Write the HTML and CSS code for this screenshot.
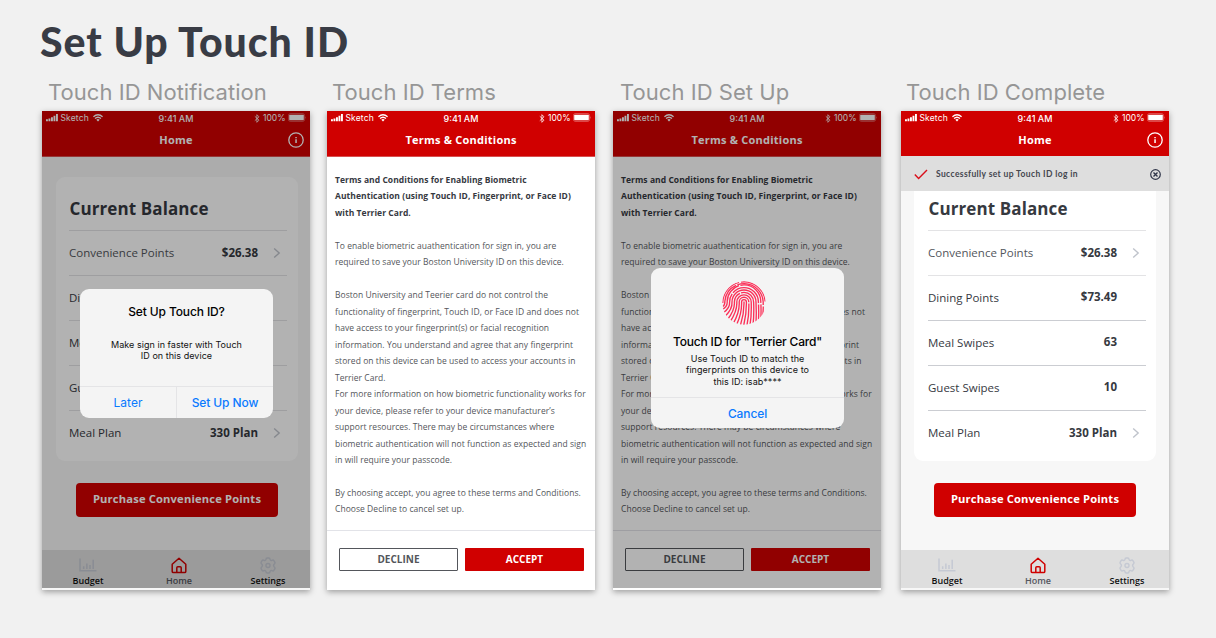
FILE: index.html
```html
<!DOCTYPE html>
<html lang="en">
<head>
<meta charset="utf-8">
<title>Set Up Touch ID</title>
<link rel="stylesheet" href="styles.css">
</head>
<body>
<svg class="defs" width="0" height="0">
  <symbol id="signal" viewBox="0 0 12 8"><path d="M0 5.200h1.900V7.200H0zM2.500 4.400h1.900V7.200H2.500zM5 3.200h1.900V7.200H5zM7.500 1.700h1.900V7.200H7.500zM10 0h1.900V7.200H10z" fill="#fff"/></symbol>
  <symbol id="wifi" viewBox="0 0 10 8"><g fill="none" stroke="#fff" stroke-width="1.3"><path d="M.4 2.700Q5-1.300 9.600 2.700M2 4.600Q5 1.900 8 4.600"/></g><path d="M3.300 5.800Q5 4.400 6.700 5.800L5 7.600z" fill="#fff"/></symbol>
  <symbol id="bluetooth" viewBox="0 0 6 9"><path d="M.8 2.300 5 6.200 2.900 8.300V.7L5 2.800.8 6.700" fill="none" stroke="#fff" stroke-width=".8"/></symbol>
  <symbol id="battery" viewBox="0 0 18 9"><rect x=".4" y=".6" width="16.200" height="7.800" rx="2" fill="none" stroke="#fff" stroke-opacity=".45" stroke-width=".7"/><rect x="1.200" y="1.700" width="14.600" height="5.600" rx=".8" fill="#fff"/><path d="M17.200 3.200q1 1.300 0 2.600z" fill="#fff" fill-opacity=".5"/></symbol>
  <symbol id="info" viewBox="0 0 16 16"><circle cx="8" cy="8" r="7.200" fill="none" stroke="#fff" stroke-width="1.300"/><path d="M7.300 4.900h1.500v1.300H7.300zM7.300 7.300h1.500v3.700H7.300z" fill="#fff"/></symbol>
  <symbol id="chevron" viewBox="0 0 8 12"><path d="M1.200 1.400 6.200 6 1.200 10.600" fill="none" stroke="#bfc3cb" stroke-width="1.400"/></symbol>
  <symbol id="chart" viewBox="0 0 18 14"><path d="M1 .5V12.800H17.500M4.700 11V8.300M7.900 11V5.500M11 11V7M14.200 11V1.800" fill="none" stroke="#c5c9d3" stroke-width="1.500"/></symbol>
  <symbol id="home" viewBox="0 0 16 17"><path d="M1.200 7.300 8 1.200 14.800 7.300V14.400Q14.800 15.600 13.600 15.600H2.400Q1.200 15.600 1.200 14.400ZM5.800 15.600V10.700Q5.800 9.700 6.800 9.700H9.200Q10.200 9.700 10.200 10.700V15.600" fill="none" stroke="#cf0000" stroke-width="1.500" stroke-linejoin="round"/></symbol>
  <symbol id="gear" viewBox="0 0 16 17"><path d="M5.900 2.600Q6.100 1 7.200 1H8.800Q9.900 1 10.100 2.600 10.500 3.800 11.900 3.300 13.300 2.700 13.900 3.700L14.800 5.200Q15.400 6.200 14.100 7.200 13.100 8.500 14.100 9.800 15.400 10.800 14.800 11.800L13.900 13.300Q13.300 14.300 11.900 13.700 10.500 13.200 10.100 14.400 9.900 16 8.800 16H7.200Q6.100 16 5.900 14.400 5.500 13.200 4.100 13.700 2.700 14.300 2.100 13.300L1.200 11.800Q.6 10.800 1.900 9.800 2.900 8.500 1.900 7.200 .6 6.200 1.200 5.200L2.100 3.700Q2.700 2.700 4.100 3.300 5.500 3.800 5.900 2.600Z" fill="none" stroke="#c5c9d3" stroke-width="1.400" stroke-linejoin="round"/><circle cx="8" cy="8.500" r="2" fill="none" stroke="#c5c9d3" stroke-width="1.400"/></symbol>
</svg>

<h1 class="title">Set Up Touch ID</h1>
<main class="boards">

  <section class="board">
    <h2 class="label label-1">Touch ID Notification</h2>
    <div class="phone">
      <header class="bar">
        <div class="status"><svg class="i-signal"><use href="#signal"/></svg><span class="carrier">Sketch</span><svg class="i-wifi"><use href="#wifi"/></svg><span class="time">9:41 AM</span><svg class="i-bt"><use href="#bluetooth"/></svg><span class="pct">100%</span><svg class="i-bat"><use href="#battery"/></svg></div>
        <div class="nav"><span>Home</span><svg class="i-info"><use href="#info"/></svg></div>
      </header>
      <div class="content">
        <div class="card">
          <h3>Current Balance</h3>
          <div class="row"><span class="soft">Convenience Points</span><b>$26.38</b><svg><use href="#chevron"/></svg></div>
          <div class="row"><span>Dining Points</span><b>$73.49</b></div>
          <div class="row"><span>Meal Swipes</span><b>63</b></div>
          <div class="row"><span>Guest Swipes</span><b>10</b></div>
          <div class="row"><span>Meal Plan</span><b>330 Plan</b><svg><use href="#chevron"/></svg></div>
        </div>
        <div class="purchase">Purchase Convenience Points</div>
      </div>
      <footer class="tabs">
        <div class="tab"><svg class="i-chart"><use href="#chart"/></svg>Budget</div>
        <div class="tab current"><svg class="i-home"><use href="#home"/></svg>Home</div>
        <div class="tab"><svg class="i-gear"><use href="#gear"/></svg>Settings</div>
      </footer>
      <div class="dim"></div>
      <div class="dialog dialog-setup">
        <h4>Set Up Touch ID?</h4>
        <p>Make sign in faster with Touch<br>ID on this device</p>
        <div class="actions"><span>Later</span><span class="strong">Set Up Now</span></div>
      </div>
    </div>
  </section>

  <section class="board">
    <h2 class="label label-2">Touch ID Terms</h2>
    <div class="phone white">
      <header class="bar">
        <div class="status"><svg class="i-signal"><use href="#signal"/></svg><span class="carrier">Sketch</span><svg class="i-wifi"><use href="#wifi"/></svg><span class="time">9:41 AM</span><svg class="i-bt"><use href="#bluetooth"/></svg><span class="pct">100%</span><svg class="i-bat"><use href="#battery"/></svg></div>
        <div class="nav"><span>Terms &amp; Conditions</span></div>
      </header>
      <div class="terms">
        <p class="lead">Terms and Conditions for Enabling Biometric<br>Authentication (using Touch ID, Fingerprint, or Face ID)<br>with Terrier Card.</p>
        <p>To enable biometric auathentication for sign in, you are<br>required to save your Boston University ID on this device.</p>
        <p>Boston University and Teerier card do not control the<br>functionality of fingerprint, Touch ID, or Face ID and does not<br>have access to your fingerprint(s) or facial recognition<br>information. You understand and agree that any fingerprint<br>stored on this device can be used to access your accounts in<br>Terrier Card.<br>For more information on how biometric functionality works for<br>your device, please refer to your device manufacturer’s<br>support resources. There may be circumstances where<br>biometric authentication will not function as expected and sign<br>in will require your passcode.</p>
        <p>By choosing accept, you agree to these terms and Conditions.<br>Choose Decline to cancel set up.</p>
      </div>
      <div class="choices"><span class="decline">DECLINE</span><span class="accept">ACCEPT</span></div>
    </div>
  </section>

  <section class="board">
    <h2 class="label label-3">Touch ID Set Up</h2>
    <div class="phone white">
      <header class="bar">
        <div class="status"><svg class="i-signal"><use href="#signal"/></svg><span class="carrier">Sketch</span><svg class="i-wifi"><use href="#wifi"/></svg><span class="time">9:41 AM</span><svg class="i-bt"><use href="#bluetooth"/></svg><span class="pct">100%</span><svg class="i-bat"><use href="#battery"/></svg></div>
        <div class="nav"><span>Terms &amp; Conditions</span></div>
      </header>
      <div class="terms">
        <p class="lead">Terms and Conditions for Enabling Biometric<br>Authentication (using Touch ID, Fingerprint, or Face ID)<br>with Terrier Card.</p>
        <p>To enable biometric auathentication for sign in, you are<br>required to save your Boston University ID on this device.</p>
        <p>Boston University and Teerier card do not control the<br>functionality of fingerprint, Touch ID, or Face ID and does not<br>have access to your fingerprint(s) or facial recognition<br>information. You understand and agree that any fingerprint<br>stored on this device can be used to access your accounts in<br>Terrier Card.<br>For more information on how biometric functionality works for<br>your device, please refer to your device manufacturer’s<br>support resources. There may be circumstances where<br>biometric authentication will not function as expected and sign<br>in will require your passcode.</p>
        <p>By choosing accept, you agree to these terms and Conditions.<br>Choose Decline to cancel set up.</p>
      </div>
      <div class="choices"><span class="decline">DECLINE</span><span class="accept">ACCEPT</span></div>
      <div class="dim"></div>
      <div class="dialog dialog-finger">
        <svg class="i-finger" viewBox="0 0 44 44">
          <clipPath id="disc"><circle cx="22" cy="22" r="21.700"/></clipPath>
          <g clip-path="url(#disc)" fill="none" stroke="#fb3058" stroke-width="1.350">
            <path d="M22 20.500Q22.300 32 18.500 44"/>
            <path d="M14.500 44Q20 32 19.600 21A2.400 2.400 0 0 1 24.400 21Q24.600 33 21.800 44"/>
            <path d="M11 43Q17.800 31 17.200 21A4.800 4.800 0 0 1 26.800 21Q27.200 34 25 44" stroke-dasharray="38 1.200"/>
            <path d="M8 41Q15.400 30 14.800 21A7.200 7.200 0 0 1 29.200 21Q29.700 34 28 44"/>
            <path d="M5.500 38.500Q13 29 12.400 21A9.600 9.600 0 0 1 31.600 21Q32.200 33 31 44" stroke-dasharray="30 1.200 60"/>
            <path d="M3 35.500Q10.600 28 10 21A12 12 0 0 1 34 21Q34.600 32 34 43"/>
            <path d="M1 32Q8.200 27 7.600 21A14.400 14.400 0 0 1 36.400 21Q37 31 36.500 41" stroke-dasharray="22 1.400 36 1.400"/>
            <path d="M0 28.500Q5.600 26 5.200 20.500A16.800 16.800 0 0 1 38.800 21Q39.300 30 38.800 38" stroke-dasharray="31 1.400"/>
            <path d="M1 25.500Q3 24 2.900 20A19.200 19.200 0 0 1 41.200 21V24M41.300 25.500 40.900 34" stroke-dasharray="26 1.400 50"/>
            <path d="M.7 22A21.200 21.200 0 0 1 17 1.400M19 1A21.200 21.200 0 0 1 43.200 20.500"/>
          </g>
        </svg>
        <h4>Touch ID for "Terrier Card"</h4>
        <p>Use Touch ID to match the<br>fingerprints on this device to<br>this ID: isab****</p>
        <div class="actions"><span class="strong">Cancel</span></div>
      </div>
    </div>
  </section>

  <section class="board">
    <h2 class="label label-4">Touch ID Complete</h2>
    <div class="phone done">
      <header class="bar">
        <div class="status"><svg class="i-signal"><use href="#signal"/></svg><span class="carrier">Sketch</span><svg class="i-wifi"><use href="#wifi"/></svg><span class="time">9:41 AM</span><svg class="i-bt"><use href="#bluetooth"/></svg><span class="pct">100%</span><svg class="i-bat"><use href="#battery"/></svg></div>
        <div class="nav"><span>Home</span><svg class="i-info"><use href="#info"/></svg></div>
      </header>
      <div class="content">
        <div class="card">
          <h3>Current Balance</h3>
          <div class="row"><span class="soft">Convenience Points</span><b>$26.38</b><svg><use href="#chevron"/></svg></div>
          <div class="row"><span>Dining Points</span><b class="up">$73.49</b></div>
          <div class="row"><span>Meal Swipes</span><b class="up">63</b></div>
          <div class="row"><span>Guest Swipes</span><b class="up">10</b></div>
          <div class="row"><span>Meal Plan</span><b>330 Plan</b><svg><use href="#chevron"/></svg></div>
        </div>
        <div class="purchase">Purchase Convenience Points</div>
      </div>
      <footer class="tabs">
        <div class="tab"><svg class="i-chart"><use href="#chart"/></svg>Budget</div>
        <div class="tab current"><svg class="i-home"><use href="#home"/></svg>Home</div>
        <div class="tab"><svg class="i-gear"><use href="#gear"/></svg>Settings</div>
      </footer>
      <div class="toast">
        <svg class="i-check" viewBox="0 0 14 11"><path d="M.8 5.600 4.600 9.600 13 .9" fill="none" stroke="#d90f1b" stroke-width="1.400"/></svg>
        <span>Successfully set up Touch ID log in</span>
        <svg class="i-close" viewBox="0 0 11 11"><circle cx="5.500" cy="5.500" r="4.800" fill="none" stroke="#30364a" stroke-width="1.200"/><path d="M3.500 3.500 7.500 7.500M7.500 3.500 3.500 7.500" stroke="#30364a" stroke-width="1.400"/></svg>
      </div>
    </div>
  </section>
</main>
</body>
</html>
```
FILE: styles.css
```css
* { box-sizing: border-box; }
body { margin: 0; width: 1216px; height: 638px; overflow: hidden; background: #f1f1f1; font-family: "Open Sans", sans-serif; color: #36393f; }
h1, h2, h3, h4, p { margin: 0; font-weight: normal; white-space: nowrap; }
svg { display: block; flex: none; }
.defs { position: absolute; }

.title { height: 76px; padding: 17px 0 0 40px; font: 900 41px/50px Lato, sans-serif; letter-spacing: 0.97px; color: #393c45; }
.boards { display: grid; grid-template-columns: 285px 286px 288px 268px; padding-left: 42px; }
.board { width: 268px; }
.label { height: 35px; font: 400 22px/33px Inter, sans-serif; color: #969696; letter-spacing: 0.04px; }
.label-1 { padding-left: 6px; }
.label-2 { padding-left: 5px; }
.label-3 { padding-left: 7px; }
.label-4 { padding-left: 5px; }

.phone { position: relative; display: flex; flex-direction: column; width: 268px; height: 479px; padding-bottom: 2px; background: #f7f7f7; box-shadow: 0 2px 6px rgba(0, 0, 0, 0.35); }
.phone.white { background: #fff; }
.bar { height: 46px; background: #d00000; color: #fff; flex: none; border-bottom: 1px solid #d85050; }
.done .bar { height: 45px; border-bottom: 0; }
.status { display: grid; grid-template-columns: 12px 30px 10px 1fr 6px 23px 18px; column-gap: 2.5px; align-items: center; height: 15px; padding: 0 4px; font: 400 8.500px/15px Inter, sans-serif; }
.carrier { letter-spacing: 0.15px; }
.time { font-weight: 500; font-size: 9px; text-align: center; padding: 0 5px 0 0; letter-spacing: 0; }
.pct { text-align: right; }
.i-signal { width: 12px; height: 8px; margin-top: -1px; }
.i-wifi { width: 10px; height: 8px; margin-top: -1px; }
.i-bt { width: 6px; height: 9px; margin-top: -1px; }
.i-bat { width: 18px; height: 9px; margin-top: -2px; }
.nav { display: grid; grid-template-columns: 1fr; height: 29px; line-height: 28px; text-align: center; font-size: 11px; font-weight: 700; letter-spacing: 0.23px; }
.nav > * { grid-area: 1 / 1; }
.i-info { width: 16px; height: 16px; justify-self: end; margin: 6px 6px 0 0; }

.content { flex: 1; padding: 20px 12px 0 14px; }
.done .content { padding: 21px 13px 0; }
.card { height: 284px; padding: 11px 11px 0 13px; background: #fff; border-radius: 9px; }
.done .card { padding: 11px 10px 0 14px; }
.card h3 { height: 42px; padding-left: 0.5px; font-size: 17px; line-height: 42px; font-weight: 700; letter-spacing: 0.1px; }
.row { display: grid; grid-template-columns: 1fr auto 8px; column-gap: 15px; align-items: center; height: 45px; padding: 0 6px 2px 0; border-top: 1px solid #e3e3e5; font-size: 11.500px; }
.done .row:nth-child(n+4) { border-top-color: #cbcdd2; }
.row b { grid-column: 2; font-weight: 700; font-size: 11.500px; }
.row .up { padding-bottom: 2px; }
.row .soft { color: #53565c; }
.row svg { width: 8px; height: 12px; margin-top: 1px; }
.purchase { width: 202px; height: 34px; margin: 22px auto 0 20px; background: #d00000; border-radius: 4px; color: #fff; text-align: center; font-size: 11.200px; line-height: 32px; font-weight: 700; letter-spacing: 0.16px; }
.tabs { display: grid; grid-template-columns: 92px 90px 88px; width: 268px; height: 38px; flex: none; background: #dedede; font-size: 9px; font-weight: 600; color: #111; }
.tab { display: grid; grid-template-rows: 25px 12px; justify-items: center; align-items: center; line-height: 12px; }
.tab.current { color: #55575f; }
.tab svg { margin-top: 6px; }
.i-chart { width: 18px; height: 14px; }
.tab .i-chart { margin-top: 4px; }
.i-home, .i-gear { width: 16px; height: 17px; }

.dim { position: absolute; inset: 0 0 2px; background: rgba(0, 0, 0, 0.3); }
.dialog { position: absolute; width: 193px; display: flex; flex-direction: column; background: #f4f4f4; border-radius: 9px; color: #111; text-align: center; font-family: Inter, sans-serif; overflow: hidden; }
.dialog-setup { left: 38px; top: 178px; height: 129px; }
.dialog-finger { left: 38px; top: 156.500px; height: 160.500px; }
.dialog h4 { font-size: 12px; line-height: 16px; font-weight: 500; color: #000; letter-spacing: -0.18px; }
.dialog p { font-size: 9px; line-height: 11.500px; letter-spacing: 0.04px; }
.dialog-setup h4 { padding-top: 15px; letter-spacing: -0.12px; }
.dialog-setup p { padding-top: 19px; line-height: 11px; }
.dialog-finger p { padding-top: 3px; }
.i-finger { width: 44px; height: 44px; margin: 13px auto 9px 71px; }
.actions { display: flex; margin-top: auto; height: 32px; border-top: 1px solid #e4e4e6; color: #0a7aff; font-size: 12px; line-height: 31px; }
.dialog-finger .actions { height: 31px; }
.actions span { flex: 1; }
.actions span + span { border-left: 1px solid #e4e4e6; }
.actions .strong { font-weight: 500; letter-spacing: -0.1px; }

.terms { flex: 1; min-height: 0; padding: 15px 0 0 8px; font-size: 8.500px; line-height: 16.470px; letter-spacing: 0.042px; color: #54565b; }
.terms p { margin-bottom: 16.470px; }
.terms p:last-child { margin-bottom: 0; }
.terms .lead { font-weight: 700; color: #36393f; letter-spacing: 0.05px; }
.choices { display: grid; grid-template-columns: 119px 119px; column-gap: 7px; height: 58px; padding: 17px 0 0 12px; border-top: 1px solid #e2e3e8; font-size: 10px; line-height: 22px; font-weight: 700; text-align: center; flex: none; }
.decline { height: 23px; border: 1px solid #54565b; border-radius: 1px; color: #54565b; line-height: 21px; }
.accept { height: 23px; background: #d00000; border-radius: 1px; color: #fff; line-height: 23px; }

.toast { position: absolute; left: 0; top: 45px; width: 268px; height: 35px; display: grid; grid-template-columns: 14px 1fr 11px; column-gap: 8px; align-items: center; padding: 0 8px 0 13px; background: #dedede; font: 700 8.500px/35px Lato, sans-serif; letter-spacing: 0.370px; color: #44464e; }
.toast span { padding-top: 1px; }
.i-check { width: 14px; height: 11px; }
.i-close { width: 11px; height: 11px; }
```
